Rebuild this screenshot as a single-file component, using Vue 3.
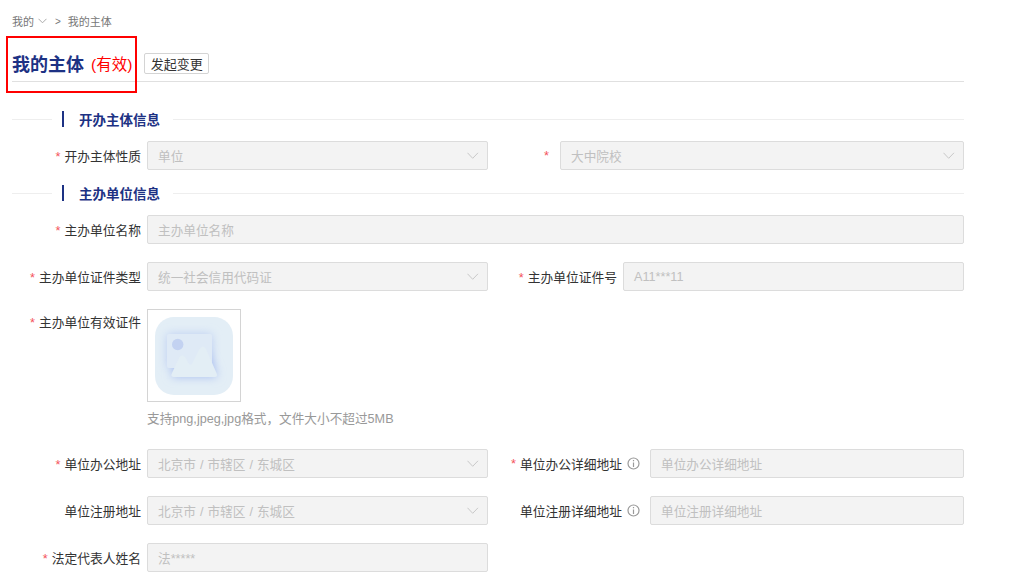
<script setup>
const chevron = 'M.5 .8l5.200 5.500L11 .8'
</script>

<template>
  <div class="page">
    <div class="crumbs">
      <span>我的</span>
      <svg class="crumb-chev" width="9" height="6" viewBox="0 0 9 6"><path d="M.5.8l4 4 4-4" fill="none" stroke="#aaa" /></svg>
      <span class="sep">&gt;</span>
      <span>我的主体</span>
    </div>
    <div class="title-row">
      <h1>我的主体</h1>
      <span class="status">(有效)</span>
      <button class="change">发起变更</button>
      <div class="red-box"></div>
    </div>

    <div class="section"><i class="line short"></i><i class="bar"></i><b>开办主体信息</b><i class="line"></i></div>
    <div class="row first">
      <div class="item"><label class="lb-l"><em>*</em>开办主体性质</label><div class="field"><span>单位</span><svg width="12" height="8" viewBox="0 0 12 8"><path :d="chevron" fill="none" stroke="#c8c8c8" /></svg></div></div>
      <div class="item"><label class="lb-s"><em>*</em></label><div class="field"><span>大中院校</span><svg width="12" height="8" viewBox="0 0 12 8"><path :d="chevron" fill="none" stroke="#c8c8c8" /></svg></div></div>
    </div>

    <div class="section s2"><i class="line short"></i><i class="bar"></i><b>主办单位信息</b><i class="line"></i></div>
    <div class="row first">
      <div class="item wide"><label class="lb-l"><em>*</em>主办单位名称</label><div class="field"><span>主办单位名称</span></div></div>
    </div>
    <div class="row">
      <div class="item"><label class="lb-l"><em>*</em>主办单位证件类型</label><div class="field"><span>统一社会信用代码证</span><svg width="12" height="8" viewBox="0 0 12 8"><path :d="chevron" fill="none" stroke="#c8c8c8" /></svg></div></div>
      <div class="item"><label class="lb-m"><em>*</em>主办单位证件号</label><div class="field"><span>A11***11</span></div></div>
    </div>
    <div class="row upload-row">
      <label class="lb-l"><em>*</em>主办单位有效证件</label>
      <div>
        <div class="thumb">
          <svg width="78" height="78" viewBox="0 0 78 78">
            <defs>
              <filter id="soft" x="-40%" y="-40%" width="180%" height="180%"><feGaussianBlur stdDeviation="5" /></filter>
            </defs>
            <rect width="78" height="78" rx="19" fill="#e3eef6" />
            <rect x="12" y="17" width="45" height="34" rx="2" fill="#bccdf2" filter="url(#soft)" />
            <path d="M19 60h41q3 0 1.500-4L51 32q-3-5-6.500 0L37 47q-1.500 1.500-3 0l-4-7q-3-3-5.500 0L17 56q-2 4 2 4z" fill="#a9bef0" filter="url(#soft)" />
            <rect x="12" y="17" width="45" height="34" rx="2" fill="#dfeaf6" />
            <circle cx="22.700" cy="27.500" r="5.700" fill="#c3d2f1" />
            <path d="M19 60h41q3 0 1.500-4L51 32q-3-5-6.500 0L37 47q-1.500 1.500-3 0l-4-7q-3-3-5.500 0L17 56q-2 4 2 4z" fill="#e3eef5" />
          </svg>
        </div>
        <div class="hint">支持png,jpeg,jpg格式&#65292;文件大小不超过5MB</div>
      </div>
    </div>
    <div class="row addr">
      <div class="item"><label class="lb-l"><em>*</em>单位办公地址</label><div class="field"><span class="addr-val">北京市 / 市辖区 / 东城区</span><svg width="12" height="8" viewBox="0 0 12 8"><path :d="chevron" fill="none" stroke="#c8c8c8" /></svg></div></div>
      <div class="item"><label class="lb-x"><em>*</em>单位办公详细地址<svg class="info" width="13" height="13" viewBox="0 0 13 13"><circle cx="6.500" cy="6.500" r="5.500" fill="none" stroke="#999" stroke-width="1.200" /><path d="M6.500 3v1.200M6.500 5.500V10" stroke="#999" fill="none" stroke-width="1.200" /></svg></label><div class="field"><span>单位办公详细地址</span></div></div>
    </div>
    <div class="row">
      <div class="item"><label class="lb-l">单位注册地址</label><div class="field"><span class="addr-val">北京市 / 市辖区 / 东城区</span><svg width="12" height="8" viewBox="0 0 12 8"><path :d="chevron" fill="none" stroke="#c8c8c8" /></svg></div></div>
      <div class="item"><label class="lb-x">单位注册详细地址<svg class="info" width="13" height="13" viewBox="0 0 13 13"><circle cx="6.500" cy="6.500" r="5.500" fill="none" stroke="#999" stroke-width="1.200" /><path d="M6.500 3v1.200M6.500 5.500V10" stroke="#999" fill="none" stroke-width="1.200" /></svg></label><div class="field"><span>单位注册详细地址</span></div></div>
    </div>
    <div class="row">
      <div class="item"><label class="lb-l"><em>*</em>法定代表人姓名</label><div class="field"><span>法*****</span></div></div>
    </div>
  </div>
</template>

<style>
html, body { margin: 0; background: #fff; overflow: hidden; }
</style>

<style scoped>
.page {
  width: 952px;
  height: 587px;
  padding-left: 12px;
  overflow: hidden;
  font-family: "Liberation Sans", "Noto Sans CJK SC", sans-serif;
  font-size: 12.750px;
  color: #333;
}
.crumbs {
  height: 42px;
  display: flex;
  align-items: center;
  font-size: 11px;
  color: #777;
}
.crumb-chev { margin-left: 4px; }
.sep { margin: 0 7px 0 8px; color: #777; font-size: 10px; }
.title-row {
  position: relative;
  height: 39px;
  display: flex;
  align-items: center;
  border-bottom: 1px solid #e0e0e0;
}
h1 {
  margin: 6px 0 0;
  font-size: 18px;
  font-weight: 700;
  color: #1d3284;
  line-height: 24px;
}
.status { margin: 3px 0 0 7px; font-size: 15.500px; color: #f00; }
.change {
  margin: 4px 0 0 12px;
  width: 65px;
  height: 21px;
  padding: 0;
  background: #fff;
  border: 1px solid #d4d4d4;
  border-radius: 2px;
  font: inherit;
  font-size: 13px;
  color: #333;
}
.red-box {
  position: absolute;
  left: -6px;
  top: -6px;
  width: 127px;
  height: 53px;
  border: 2px solid #f00;
}
.section {
  margin-top: 28px;
  height: 18px;
  display: flex;
  align-items: center;
}
.s2 { margin-top: 14px; }
.line { flex: 1; height: 1px; background: #eee; }
.line.short { flex: none; width: 40px; }
.bar { width: 2px; height: 16px; margin-left: 10px; background: #1d3284; }
.section b {
  margin: 0 13px 0 15px;
  font-size: 13.500px;
  color: #1d3284;
}
.row { display: flex; margin-top: 18px; }
.first { margin-top: 13px; }
.item { display: flex; align-items: center; flex: 1; }
.item:first-child { flex: none; width: 476px; }
.item.wide:first-child { width: 952px; }
.item:nth-child(2) { width: 476px; flex: none; }
label {
  flex: none;
  box-sizing: border-box;
  padding-right: 6px;
  text-align: right;
  white-space: nowrap;
}
label em { margin-right: 4px; font-style: normal; color: #f4525a; }
.lb-l { width: 135px; }
.lb-s { width: 72px; padding-right: 7px; }
.lb-m { width: 135px; }
.lb-x { width: 162px; display: flex; align-items: center; justify-content: flex-end; padding-right: 10px; }
.info { margin-left: 5px; }
.field {
  flex: 1;
  box-sizing: border-box;
  height: 29px;
  padding: 0 8px 0 10px;
  display: flex;
  align-items: center;
  justify-content: space-between;
  background: #f3f3f3;
  border: 1px solid #dcdcdc;
  border-radius: 2px;
  color: #c0c0c0;
  font-size: 12.650px;
}
.addr-val { word-spacing: 0.500px; }
.upload-row { align-items: flex-start; }
.upload-row label { line-height: 28px; }
.thumb {
  box-sizing: border-box;
  width: 94px;
  height: 93px;
  padding: 7px;
  border: 1px solid #d4d4d4;
}
.thumb svg { display: block; }
.hint { margin-top: 7px; height: 20px; line-height: 20px; font-size: 12.650px; color: #999; }
.addr { margin-top: 20px; }
</style>
